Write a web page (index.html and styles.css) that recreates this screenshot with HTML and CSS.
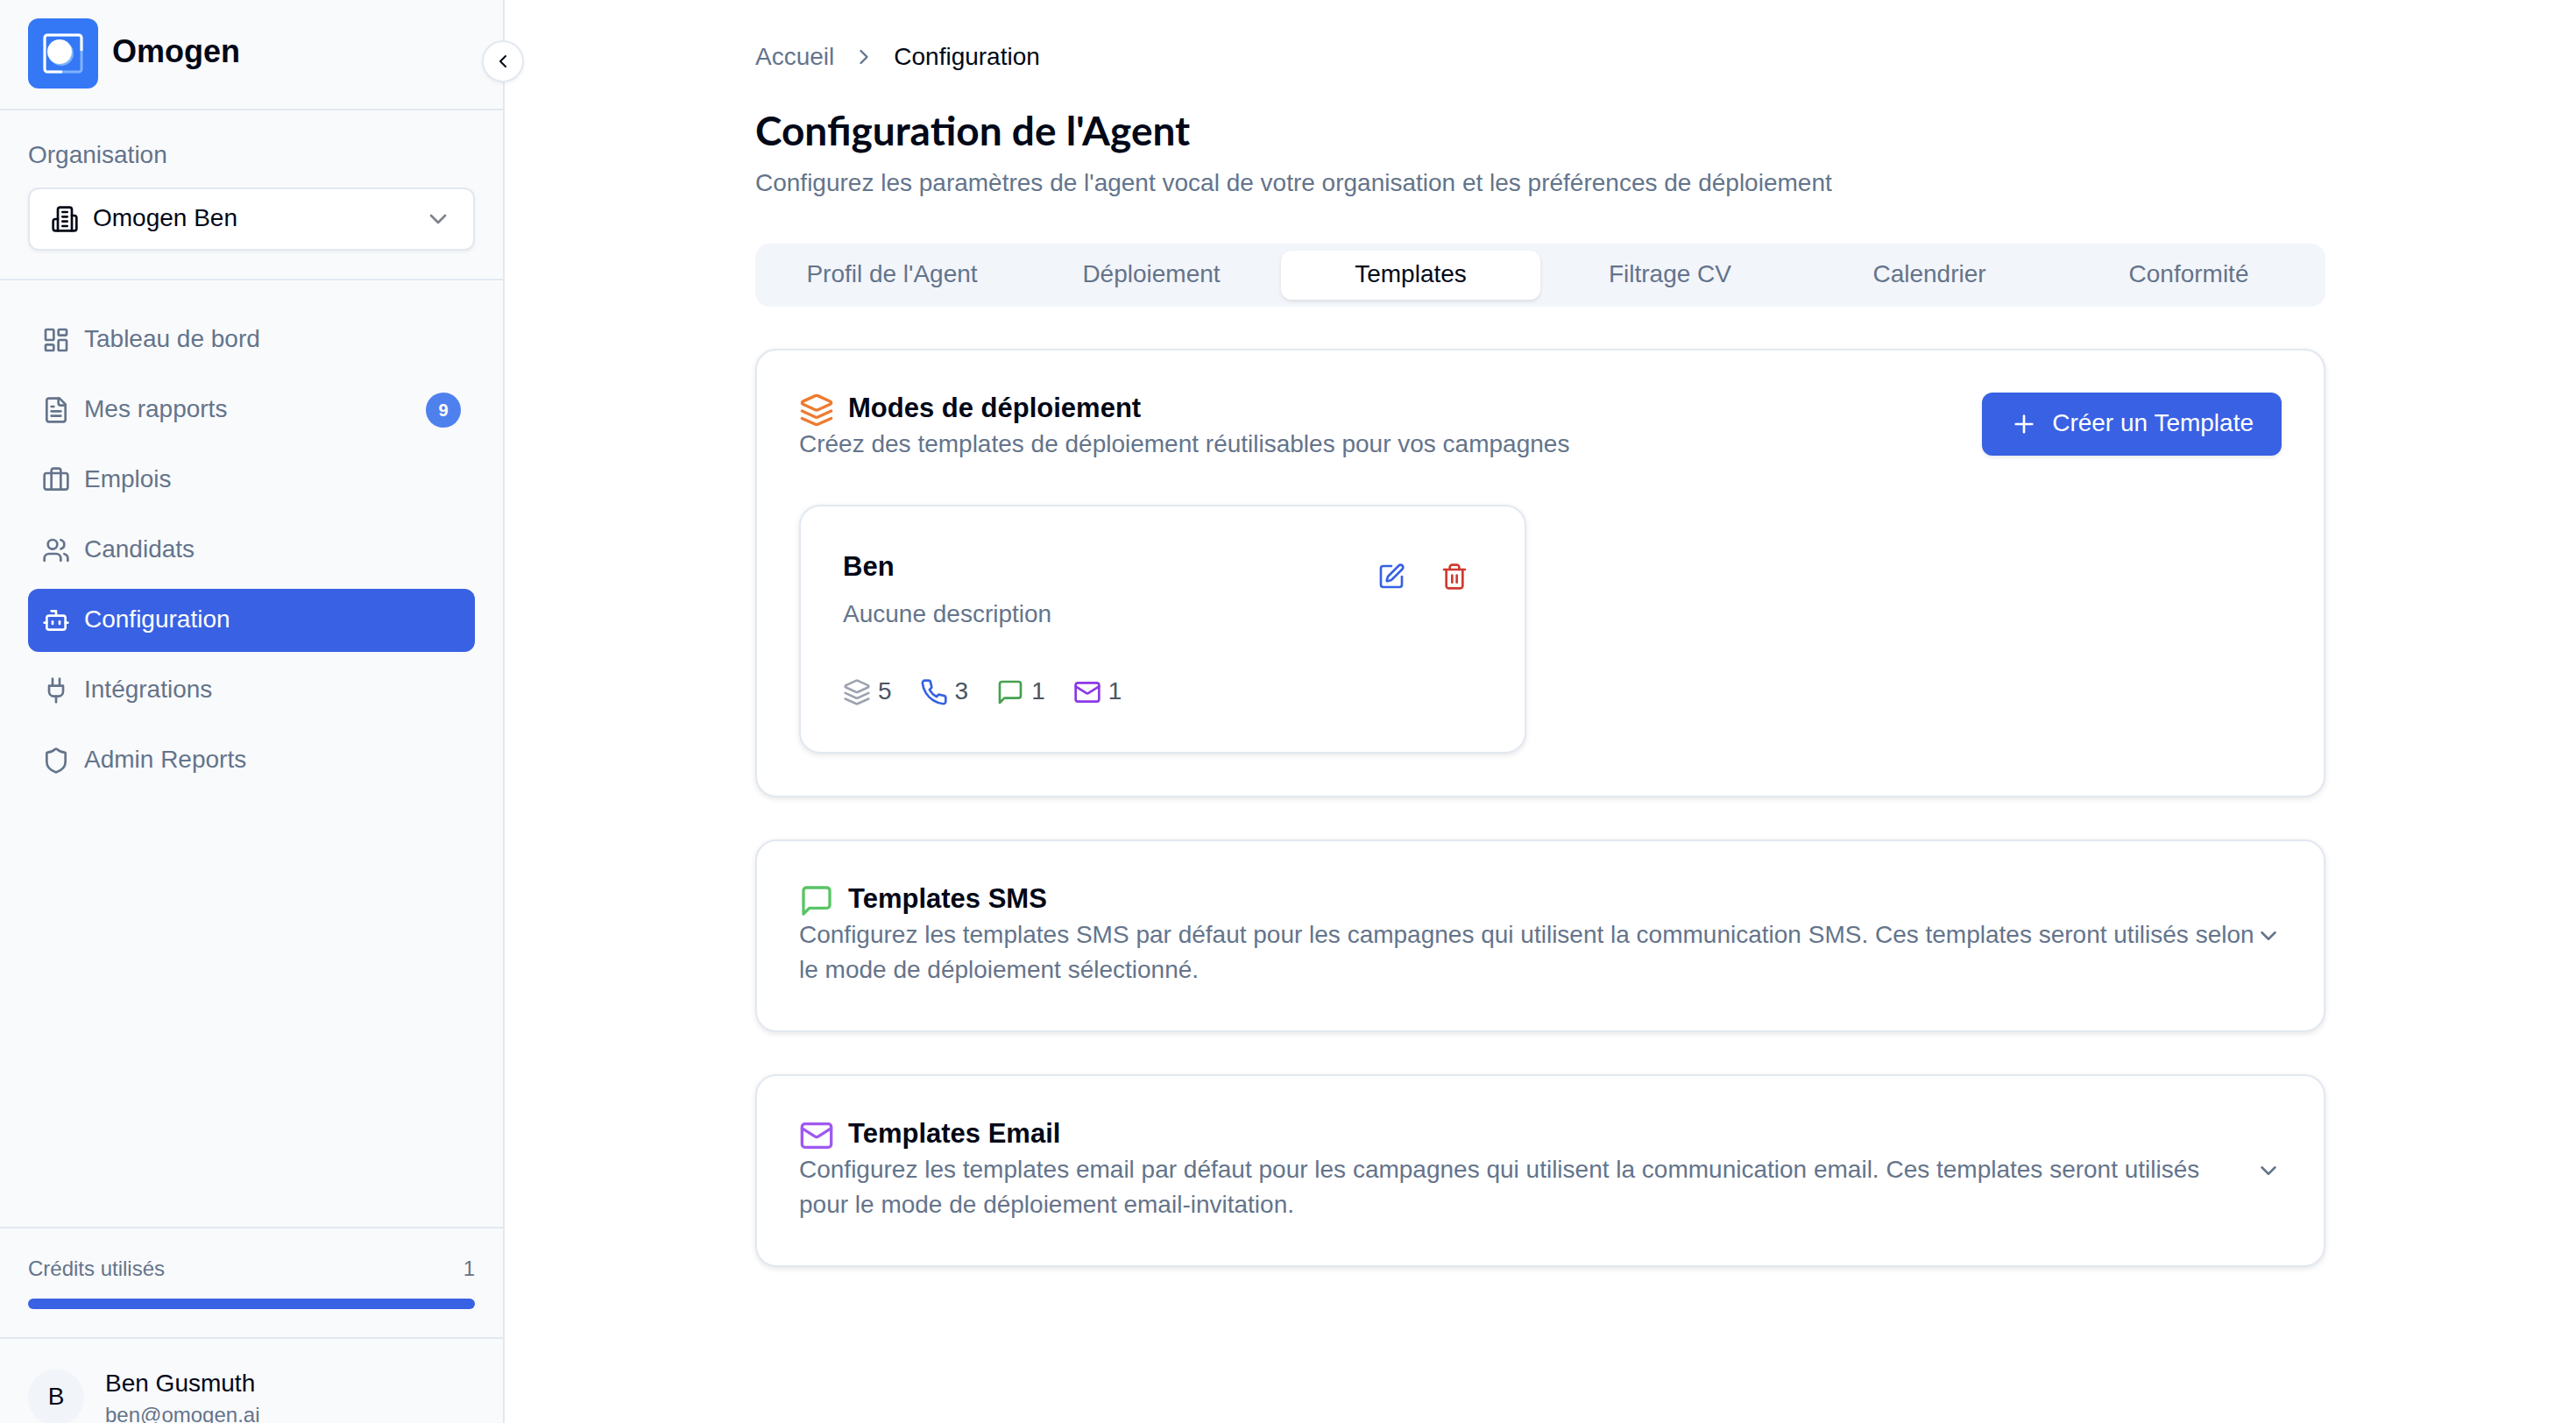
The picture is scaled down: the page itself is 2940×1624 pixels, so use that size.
FILE: index.html
```html
<!DOCTYPE html>
<html lang="fr">
<head>
    <meta charset="UTF-8">
    <title>Configuration - Omogen</title>
    <link rel="stylesheet" href="styles.css">
</head>
<body>
    <!-- Icônes partagées -->
    <svg class="sprite" aria-hidden="true">
        <symbol id="i-layers" viewBox="0 0 24 24"><path d="m12.83 2.18a2 2 0 0 0-1.66 0L2.6 6.08a1 1 0 0 0 0 1.83l8.58 3.91a2 2 0 0 0 1.66 0l8.58-3.9a1 1 0 0 0 0-1.83Z"/><path d="m22 17.65-9.17 4.16a2 2 0 0 1-1.66 0L2 17.65"/><path d="m22 12.65-9.17 4.16a2 2 0 0 1-1.66 0L2 12.65"/></symbol>
        <symbol id="i-message" viewBox="0 0 24 24"><path d="M21 15a2 2 0 0 1-2 2H7l-4 4V5a2 2 0 0 1 2-2h14a2 2 0 0 1 2 2z"/></symbol>
        <symbol id="i-mail" viewBox="0 0 24 24"><rect width="20" height="16" x="2" y="4" rx="2"/><path d="m22 7-8.97 5.7a1.94 1.94 0 0 1-2.06 0L2 7"/></symbol>
        <symbol id="i-down" viewBox="0 0 24 24"><path d="m6 9 6 6 6-6"/></symbol>
    </svg>

    <div class="app">
        <aside class="sidebar">
            <div class="brand">
                <svg class="logo" viewBox="0 0 80 80" aria-hidden="true">
                    <rect width="80" height="80" rx="12" fill="#3478f6"/>
                    <rect x="19" y="19" width="42" height="42" rx="3" fill="none" stroke="#7fb2fb" stroke-width="3"/>
                    <path d="M61 37V22a3 3 0 0 0-3-3H22a3 3 0 0 0-3 3v36a3 3 0 0 0 3 3h17" fill="none" stroke="#fff" stroke-width="3"/>
                    <circle cx="38" cy="40" r="14" fill="#7fb2fb"/>
                    <circle cx="36" cy="38" r="14" fill="#fff"/>
                </svg>
                <span class="brand-name">Omogen</span>
                <button class="collapse" type="button" aria-label="Réduire le menu">
                    <svg class="icon icon-xs" viewBox="0 0 24 24"><path d="m15 18-6-6 6-6"/></svg>
                </button>
            </div>

            <div class="organisation">
                <label for="org">Organisation</label>
                <div class="select-box">
                    <svg class="icon" viewBox="0 0 24 24"><path d="M6 22V4a2 2 0 0 1 2-2h8a2 2 0 0 1 2 2v18Z"/><path d="M6 12H4a2 2 0 0 0-2 2v6a2 2 0 0 0 2 2h2"/><path d="M18 9h2a2 2 0 0 1 2 2v9a2 2 0 0 1-2 2h-2"/><path d="M10 6h4"/><path d="M10 10h4"/><path d="M10 14h4"/><path d="M10 18h4"/></svg>
                    <select id="org">
                        <option>Omogen Ben</option>
                    </select>
                    <svg class="icon muted-icon"><use href="#i-down"/></svg>
                </div>
            </div>

            <nav class="menu">
                <a href="#">
                    <svg class="icon" viewBox="0 0 24 24"><rect width="7" height="9" x="3" y="3" rx="1"/><rect width="7" height="5" x="14" y="3" rx="1"/><rect width="7" height="9" x="14" y="12" rx="1"/><rect width="7" height="5" x="3" y="16" rx="1"/></svg>
                    <span>Tableau de bord</span>
                </a>
                <a href="#">
                    <svg class="icon" viewBox="0 0 24 24"><path d="M15 2H6a2 2 0 0 0-2 2v16a2 2 0 0 0 2 2h12a2 2 0 0 0 2-2V7Z"/><path d="M14 2v4a2 2 0 0 0 2 2h4"/><path d="M10 9H8"/><path d="M16 13H8"/><path d="M16 17H8"/></svg>
                    <span>Mes rapports</span>
                    <span class="badge">9</span>
                </a>
                <a href="#">
                    <svg class="icon" viewBox="0 0 24 24"><path d="M16 20V4a2 2 0 0 0-2-2h-4a2 2 0 0 0-2 2v16"/><rect width="20" height="14" x="2" y="6" rx="2"/></svg>
                    <span>Emplois</span>
                </a>
                <a href="#">
                    <svg class="icon" viewBox="0 0 24 24"><path d="M16 21v-2a4 4 0 0 0-4-4H6a4 4 0 0 0-4 4v2"/><circle cx="9" cy="7" r="4"/><path d="M22 21v-2a4 4 0 0 0-3-3.87"/><path d="M16 3.13a4 4 0 0 1 0 7.75"/></svg>
                    <span>Candidats</span>
                </a>
                <a href="#" class="active" aria-current="page">
                    <svg class="icon" viewBox="0 0 24 24"><path d="M12 8V4H8"/><rect width="16" height="12" x="4" y="8" rx="2"/><path d="M2 14h2"/><path d="M20 14h2"/><path d="M15 13v2"/><path d="M9 13v2"/></svg>
                    <span>Configuration</span>
                </a>
                <a href="#">
                    <svg class="icon" viewBox="0 0 24 24"><path d="M12 22v-5"/><path d="M9 8V2"/><path d="M15 8V2"/><path d="M18 8v5a4 4 0 0 1-4 4h-4a4 4 0 0 1-4-4V8Z"/></svg>
                    <span>Intégrations</span>
                </a>
                <a href="#">
                    <svg class="icon" viewBox="0 0 24 24"><path d="M20 13c0 5-3.500 7.500-7.660 8.950a1 1 0 0 1-.67-.01C7.500 20.500 4 18 4 13V6a1 1 0 0 1 1-1c2 0 4.500-1.200 6.240-2.720a1.170 1.170 0 0 1 1.520 0C14.510 3.810 17 5 19 5a1 1 0 0 1 1 1z"/></svg>
                    <span>Admin Reports</span>
                </a>
            </nav>

            <div class="credits">
                <div class="credits-row">
                    <span>Crédits utilisés</span>
                    <span>1</span>
                </div>
                <div class="credits-bar"></div>
            </div>

            <div class="user">
                <div class="avatar">B</div>
                <div>
                    <div class="user-name">Ben Gusmuth</div>
                    <div class="user-email">ben@omogen.ai</div>
                </div>
            </div>
        </aside>

        <main class="main">
            <div class="content">
                <nav class="breadcrumb" aria-label="Fil d'Ariane">
                    <a href="#">Accueil</a>
                    <svg class="icon icon-sm" viewBox="0 0 24 24"><path d="m9 18 6-6-6-6"/></svg>
                    <span>Configuration</span>
                </nav>

                <h1>Configuration de l'Agent</h1>
                <p class="subtitle">Configurez les paramètres de l'agent vocal de votre organisation et les préférences de déploiement</p>

                <div class="tabs" role="tablist">
                    <button type="button" role="tab">Profil de l'Agent</button>
                    <button type="button" role="tab">Déploiement</button>
                    <button type="button" role="tab" class="active" aria-selected="true">Templates</button>
                    <button type="button" role="tab">Filtrage CV</button>
                    <button type="button" role="tab">Calendrier</button>
                    <button type="button" role="tab">Conformité</button>
                </div>

                <section class="card">
                    <div class="card-header">
                        <div class="card-text">
                            <h2><svg class="icon icon-lg orange"><use href="#i-layers"/></svg>Modes de déploiement</h2>
                            <p>Créez des templates de déploiement réutilisables pour vos campagnes</p>
                        </div>
                        <button class="btn-primary" type="button">
                            <svg class="icon" viewBox="0 0 24 24"><path d="M5 12h14"/><path d="M12 5v14"/></svg>
                            <span>Créer un Template</span>
                        </button>
                    </div>
                    <div class="templates">
                        <article class="card template">
                            <div class="template-header">
                                <div>
                                    <h3>Ben</h3>
                                    <p>Aucune description</p>
                                </div>
                                <div class="actions">
                                    <button type="button" class="blue" aria-label="Modifier">
                                        <svg class="icon" viewBox="0 0 24 24"><path d="M12 3H5a2 2 0 0 0-2 2v14a2 2 0 0 0 2 2h14a2 2 0 0 0 2-2v-7"/><path d="M18.375 2.625a1 1 0 0 1 3 3l-9.013 9.014a2 2 0 0 1-.853.505l-2.873.84a.5.5 0 0 1-.62-.62l.84-2.873a2 2 0 0 1 .506-.852z"/></svg>
                                    </button>
                                    <button type="button" class="red" aria-label="Supprimer">
                                        <svg class="icon" viewBox="0 0 24 24"><path d="M3 6h18"/><path d="M19 6v14c0 1-1 2-2 2H7c-1 0-2-1-2-2V6"/><path d="M8 6V4c0-1 1-2 2-2h4c1 0 2 1 2 2v2"/><path d="M10 11v6"/><path d="M14 11v6"/></svg>
                                    </button>
                                </div>
                            </div>
                            <div class="stats">
                                <div><svg class="icon grey"><use href="#i-layers"/></svg><span>5</span></div>
                                <div><svg class="icon blue" viewBox="0 0 24 24"><path d="M22 16.920v3a2 2 0 0 1-2.180 2 19.790 19.790 0 0 1-8.630-3.070 19.500 19.500 0 0 1-6-6 19.790 19.790 0 0 1-3.070-8.670A2 2 0 0 1 4.110 2h3a2 2 0 0 1 2 1.720 12.840 12.840 0 0 0 .7 2.810 2 2 0 0 1-.45 2.110L8.090 9.910a16 16 0 0 0 6 6l1.270-1.270a2 2 0 0 1 2.110-.45 12.840 12.840 0 0 0 2.810.7A2 2 0 0 1 22 16.920z"/></svg><span>3</span></div>
                                <div><svg class="icon green-dark"><use href="#i-message"/></svg><span>1</span></div>
                                <div><svg class="icon purple-dark"><use href="#i-mail"/></svg><span>1</span></div>
                            </div>
                        </article>
                    </div>
                </section>

                <section class="card card-row">
                    <div class="card-text">
                        <h2><svg class="icon icon-lg green"><use href="#i-message"/></svg>Templates SMS</h2>
                        <p>Configurez les templates SMS par défaut pour les campagnes qui utilisent la communication SMS. Ces templates seront utilisés selon le mode de déploiement sélectionné.</p>
                    </div>
                    <button class="toggle" type="button" aria-label="Afficher les templates SMS">
                        <svg class="icon"><use href="#i-down"/></svg>
                    </button>
                </section>

                <section class="card card-row">
                    <div class="card-text">
                        <h2><svg class="icon icon-lg purple"><use href="#i-mail"/></svg>Templates Email</h2>
                        <p>Configurez les templates email par défaut pour les campagnes qui utilisent la communication email. Ces templates seront utilisés pour le mode de déploiement email-invitation.</p>
                    </div>
                    <button class="toggle" type="button" aria-label="Afficher les templates email">
                        <svg class="icon"><use href="#i-down"/></svg>
                    </button>
                </section>
            </div>
        </main>
    </div>
</body>
</html>
```
FILE: styles.css
```css
* {
    box-sizing: border-box;
}

body {
    margin: 0;
    background: #fff;
    color: #020817;
    font-family: 'Liberation Sans', Arial, sans-serif;
    font-size: 28px;
    line-height: 40px;
}

h1, h2, h3, p {
    margin: 0;
}

a {
    color: inherit;
    text-decoration: none;
}

button, select {
    margin: 0;
    padding: 0;
    border: 0;
    background: none;
    color: inherit;
    font: inherit;
    cursor: pointer;
}

/* Icônes */
.sprite {
    display: none;
}

.icon {
    flex-shrink: 0;
    display: block;
    width: 32px;
    height: 32px;
    fill: none;
    stroke: currentColor;
    stroke-width: 2;
    stroke-linecap: round;
    stroke-linejoin: round;
}

.icon-xs {
    width: 24px;
    height: 24px;
}

.icon-sm {
    width: 28px;
    height: 28px;
}

.icon-lg {
    width: 40px;
    height: 40px;
}

.orange { color: #ed7b30; }
.green { color: #5ac466; }
.green-dark { color: #45a150; }
.purple { color: #9f59f0; }
.purple-dark { color: #8a38e6; }
.blue { color: #3661e3; }
.red { color: #ce3a30; }
.grey { color: #9ca3af; }

/* Structure */
.app {
    display: flex;
    height: 100vh;
    overflow: hidden;
}

.sidebar {
    position: relative;
    flex-shrink: 0;
    display: flex;
    flex-direction: column;
    width: 576px;
    /* le bloc utilisateur dépasse sous la fenêtre */
    height: calc(100vh + 38px);
    background: #f9fafc;
    border-right: 2px solid #e2e8f0;
}

.brand {
    display: flex;
    align-items: center;
    gap: 16px;
    padding: 21px 32px 23px;
    border-bottom: 2px solid #e2e8f0;
}

.logo {
    width: 80px;
    height: 80px;
}

.brand-name {
    padding-bottom: 4px;
    font-size: 36px;
    font-weight: bold;
}

/* Bouton posé sur le bord du menu */
.collapse {
    position: absolute;
    top: 46px;
    right: -24px;
    display: flex;
    align-items: center;
    justify-content: center;
    width: 48px;
    height: 48px;
    background: #fff;
    border: 2px solid #e2e8f0;
    border-radius: 50%;
    box-shadow: 0 2px 4px rgba(0, 0, 0, 0.05);
}

.organisation {
    padding: 31px 32px 32px;
    border-bottom: 2px solid #e2e8f0;
}

.organisation label {
    display: block;
    margin-bottom: 17px;
    color: #64748b;
}

.select-box {
    display: flex;
    align-items: center;
    gap: 16px;
    height: 72px;
    padding: 0 24px;
    background: #fff;
    border: 2px solid #e2e8f0;
    border-radius: 12px;
    box-shadow: 0 2px 4px rgba(0, 0, 0, 0.05);
}

.select-box select {
    flex: 1;
    appearance: none;
    padding-bottom: 2px;
}

.muted-icon {
    opacity: 0.5;
}

.menu {
    flex: 1;
    display: flex;
    flex-direction: column;
    gap: 8px;
    padding: 32px;
}

.menu a {
    display: flex;
    align-items: center;
    gap: 16px;
    height: 72px;
    padding: 0 16px;
    border-radius: 12px;
    color: #64748b;
}

.menu span {
    padding-bottom: 2px;
}

.menu .active {
    background: #3961e3;
    color: #fff;
}

.menu .badge {
    width: 40px;
    height: 40px;
    margin-left: auto;
    padding: 0;
    background: #4f81ee;
    border-radius: 50%;
    color: #fff;
    font-size: 20px;
    font-weight: bold;
    text-align: center;
}

.credits {
    padding: 28px 32px 32px;
    border-top: 2px solid #e2e8f0;
}

.credits-row {
    display: flex;
    justify-content: space-between;
    margin-bottom: 16px;
    color: #64748b;
    font-size: 24px;
    line-height: 36px;
}

.credits-bar {
    height: 12px;
    background: #3961e3;
    border-radius: 6px;
}

.user {
    display: flex;
    align-items: center;
    gap: 24px;
    padding: 31px 32px;
    border-top: 2px solid #e2e8f0;
}

.avatar {
    width: 64px;
    height: 64px;
    background: #f1f5f9;
    border-radius: 50%;
    line-height: 62px;
    text-align: center;
}

.user-name {
    line-height: 40px;
}

.user-email {
    color: #64748b;
    font-size: 24px;
    line-height: 32px;
}

.main {
    flex: 1;
    padding: 45px 48px;
}

.content {
    max-width: 1792px;
    margin: 0 auto;
}

.breadcrumb {
    display: flex;
    align-items: center;
    gap: 20px;
    color: #64748b;
}

.breadcrumb span {
    color: #020817;
}

h1 {
    margin-top: 32px;
    font-family: Lato, sans-serif;
    font-size: 46px;
    font-weight: bold;
    line-height: 64px;
}

.subtitle {
    margin-top: 8px;
    color: #64748b;
}

/* Onglets */
.tabs {
    display: grid;
    grid-template-columns: repeat(6, 1fr);
    margin: 49px 0 48px;
    padding: 8px;
    background: #f2f5fa;
    border-radius: 16px;
}

.tabs button {
    padding: 7px 24px 9px;
    border-radius: 12px;
    color: #64748b;
}

.tabs .active {
    background: #fff;
    color: #020817;
    box-shadow: 0 2px 4px rgba(0, 0, 0, 0.1);
}

/* Cartes */
.card {
    padding: 48px;
    background: #fff;
    border: 2px solid #e2e8f0;
    border-radius: 24px;
    box-shadow: 0 2px 6px rgba(0, 0, 0, 0.1);
}

.card + .card {
    margin-top: 48px;
}

.card-header {
    display: flex;
    align-items: flex-start;
    justify-content: space-between;
    margin-bottom: 48px;
}

.card h2 {
    display: flex;
    gap: 16px;
    height: 39px;
    font-size: 31px;
    line-height: 35px;
}

.card-text p {
    padding-bottom: 1px;
    color: #64748b;
}

.btn-primary {
    display: flex;
    align-items: center;
    gap: 16px;
    height: 72px;
    padding: 0 32px;
    background: #3961e3;
    border-radius: 12px;
    box-shadow: 0 2px 4px rgba(0, 0, 0, 0.1);
    color: #fff;
}

.btn-primary span {
    padding-bottom: 2px;
}

.templates {
    display: grid;
    grid-template-columns: repeat(2, 1fr);
    gap: 32px;
}

.template-header {
    display: flex;
    justify-content: space-between;
    margin-bottom: 49px;
}

.template h3 {
    margin-bottom: 13px;
    font-size: 31px;
    line-height: 42px;
}

.template p {
    color: #64748b;
}

.actions {
    display: flex;
    gap: 8px;
}

.actions button {
    display: flex;
    align-items: center;
    justify-content: center;
    width: 64px;
    height: 64px;
}

.stats {
    display: flex;
    gap: 32px;
    color: #4b5563;
}

.stats div {
    display: flex;
    align-items: center;
    gap: 8px;
    height: 40px;
}

.stats span {
    padding-bottom: 2px;
}

.card-row {
    display: flex;
    align-items: center;
    justify-content: space-between;
}

.toggle {
    color: #64748b;
}

.toggle .icon {
    width: 30px;
    height: 30px;
}
```
